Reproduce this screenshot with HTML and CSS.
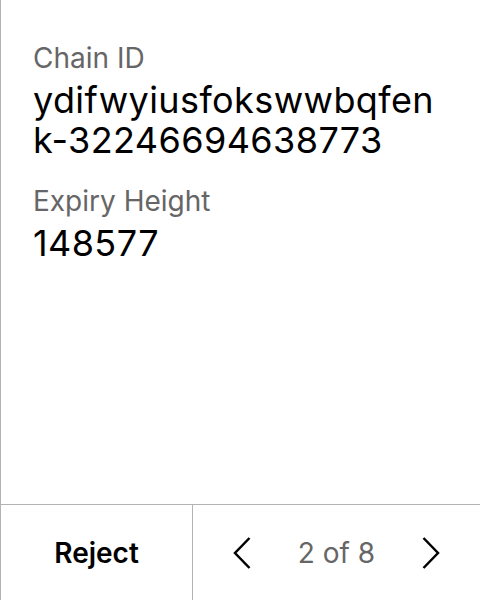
FILE: index.html
```html
<!DOCTYPE html>
<html>
<head>
<meta charset="utf-8">
<link rel="stylesheet" href="styles.css">
</head>
<body>
<div class="screen">
  <div class="content">
    <div class="field">
      <div class="label">Chain ID</div>
      <div class="value">ydifwyiusfokswwbqfen<br>k-32246694638773</div>
    </div>
    <div class="field">
      <div class="label">Expiry Height</div>
      <div class="value">148577</div>
    </div>
  </div>
  <div class="footer">
    <div class="reject">Reject</div>
    <div class="pager">
      <svg class="chev" width="18" height="32" viewBox="0 0 18 32"><path d="M16.5 1 L2 16 L16.5 31" fill="none" stroke="#000" stroke-width="2.5"/></svg>
      <div class="count">2 of 8</div>
      <svg class="chev" width="18" height="32" viewBox="0 0 18 32"><path d="M1.5 1 L16 16 L1.5 31" fill="none" stroke="#000" stroke-width="2.5"/></svg>
    </div>
  </div>
</div>
</body>
</html>
```
FILE: styles.css
```css
html, body { margin: 0; padding: 0; background: #fff; }
body { font-family: Inter, "Noto Sans", sans-serif; }
.screen {
  width: 480px; height: 600px; box-sizing: border-box;
  border-left: 1px solid #b3b3b3;
  display: flex; flex-direction: column;
}
.content { flex: 1; padding: 41px 0 0 32px; display: flex; flex-direction: column; gap: 24px; }
.label { font-size: 28px; line-height: 34px; color: #666; }
.value { font-size: 36px; line-height: 40px; color: #000; margin-top: 5px; letter-spacing: 0.4px; }
.footer {
  height: 96px; box-sizing: border-box; border-top: 1px solid #b3b3b3; display: flex;
}
.reject {
  width: 191px; border-right: 1px solid #b3b3b3;
  display: flex; align-items: center; justify-content: center;
  font-size: 28px; font-weight: 600; color: #000;
}
.pager { flex: 1; display: flex; align-items: center; justify-content: center; gap: 47px; }
.count { font-size: 28px; color: #666; }
.chev { display: block; }
```
